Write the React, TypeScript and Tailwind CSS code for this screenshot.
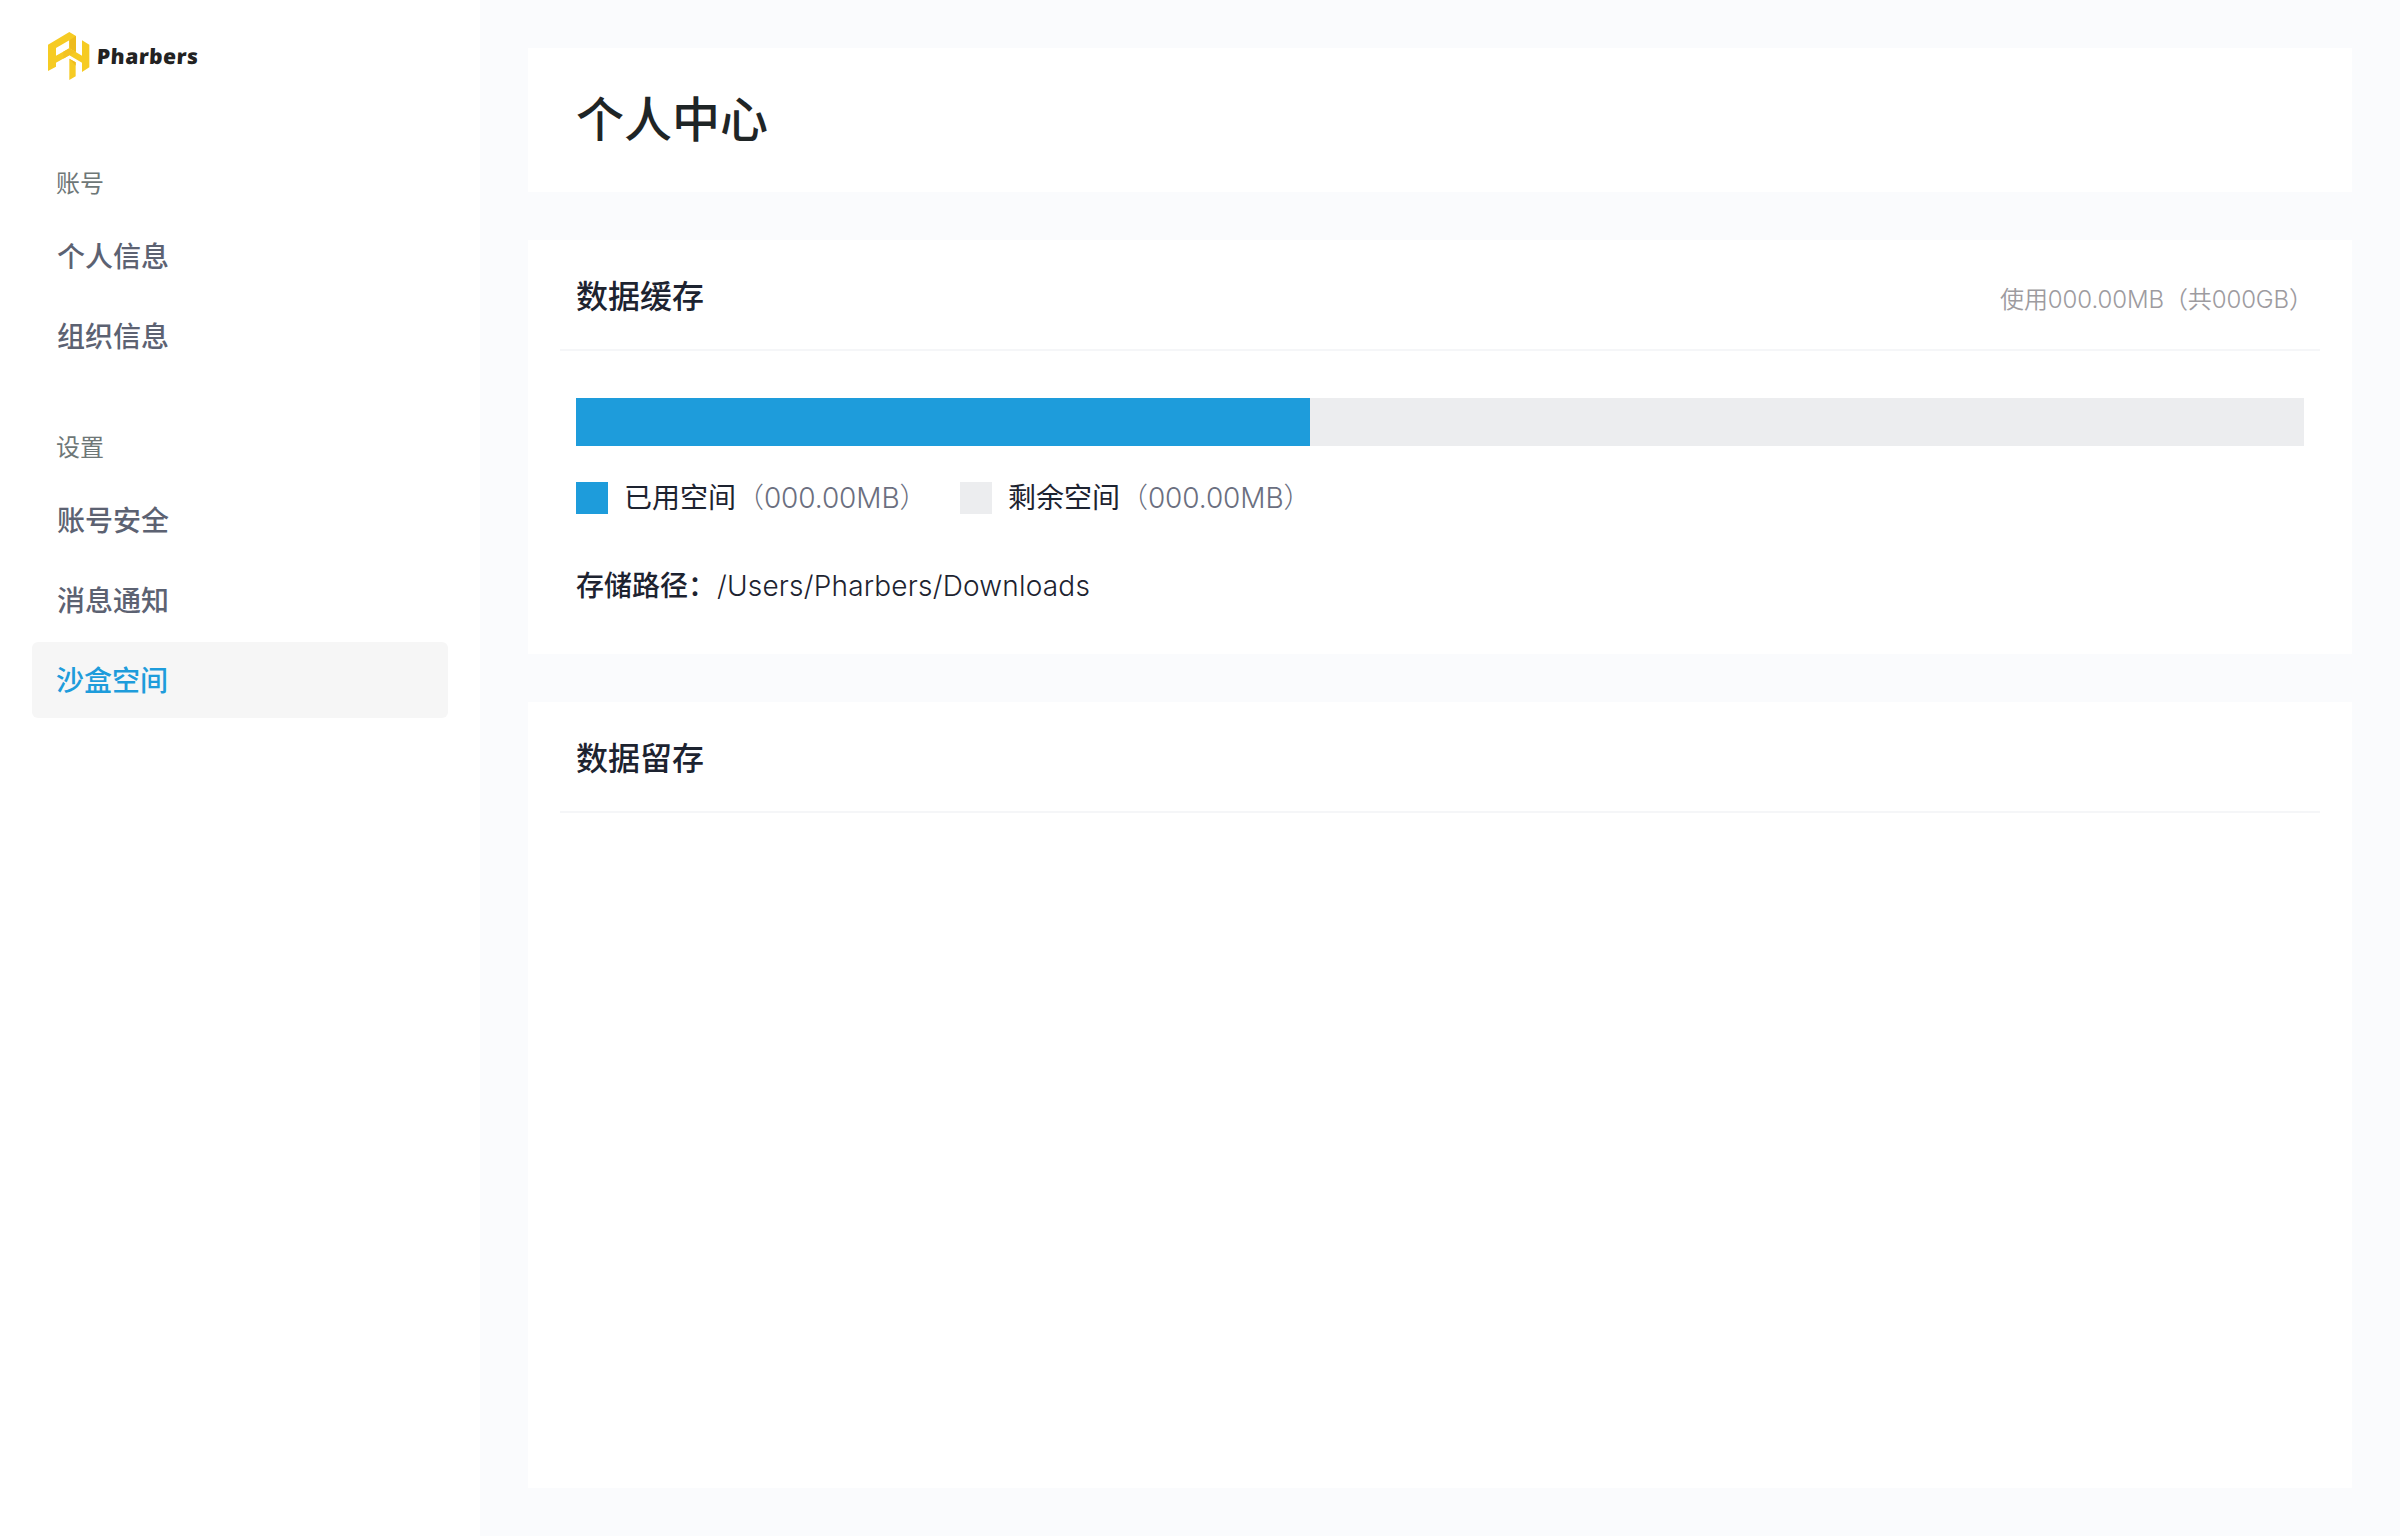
import React from "react";

type NavItem = { label: string; active?: boolean };

const accountItems: NavItem[] = [{ label: "个人信息" }, { label: "组织信息" }];
const settingItems: NavItem[] = [
  { label: "账号安全" },
  { label: "消息通知" },
  { label: "沙盒空间", active: true },
];

function Logo() {
  return (
    <div className="flex h-12 items-center pl-4">
      <svg viewBox="0 0 126 144" className="h-12 w-[42px] shrink-0">
        <path d="M0 38 64 0 84 12V60L64 49V25L24 48V71L64 49V70L24 92V104L0 117Z" fill="#f6cb23" />
        <path d="M64 25 84 12V60L64 49Z" fill="#eebb1c" />
        <path d="M64 49 102 71V25L124 38V106L102 120V92L64 70Z" fill="#f6cb23" />
        <path d="M64 49 84 60 64 70 46 80V59Z" fill="#f3c321" />
        <path d="M64 80 83 91V133L64 144Z" fill="#f6cb23" />
        <path d="M64 80 83 91V101Z" fill="#eebb1c" />
      </svg>
      <span className="mb-px ml-[7px] inline-block -skew-x-3 font-['Open_Sans','Liberation_Sans',sans-serif] text-[21px] leading-6 font-extrabold tracking-[0.5px] text-[#222]">
        Pharbers
      </span>
    </div>
  );
}

function NavGroup({ title, items }: { title: string; items: NavItem[] }) {
  return (
    <section>
      <h3 className="mb-[18px] px-6 text-[24px] leading-8 font-normal text-[#6e7777]">{title}</h3>
      <ul className="flex flex-col gap-1">
        {items.map((item) => (
          <li
            key={item.label}
            className={
              item.active
                ? "h-[76px] rounded-md bg-[#f6f6f6] px-6 text-[28px] leading-[78px] font-medium text-[#1e9cdb]"
                : "h-[76px] px-[25px] text-[28px] leading-[78px] font-medium text-[#5c6272]"
            }
          >
            {item.label}
          </li>
        ))}
      </ul>
    </section>
  );
}

function CardHeader({ title, note }: { title: string; note?: string }) {
  return (
    <header className="mx-8 flex h-[111px] items-start justify-between border-b-2 border-[#f5f6f8] px-4 pt-[33px]">
      <h2 className="text-[32px] leading-[48px] font-medium text-[#1d2330]">{title}</h2>
      {note && <span className="-mr-[9px] pt-[7px] text-[24px] leading-10 font-[350] tracking-[-0.1px] text-[#9d9ba0]">{note}</span>}
    </header>
  );
}

function Legend({ swatch, label, value }: { swatch: string; label: string; value: string }) {
  return (
    <div className="flex w-96 items-center">
      <span className={`mr-4 size-8 ${swatch}`} />
      <span className="text-[28px] leading-8 text-[#1d2330]">{label}</span>
      <span className="text-[28px] leading-8 font-light tracking-[-0.1px] text-[#6b6f80]">{value}</span>
    </div>
  );
}

export default function App() {
  return (
    <div className="flex h-[1536px] w-[2400px] bg-[#fafbfd] font-['Inter','Noto_Sans_CJK_SC',sans-serif]">
      <aside className="w-[480px] bg-white px-8 pt-8">
        <Logo />
        <nav className="flex flex-col gap-[58px] pt-[88px]">
          <NavGroup title="账号" items={accountItems} />
          <NavGroup title="设置" items={settingItems} />
        </nav>
      </aside>
      <main className="flex flex-1 flex-col gap-12 p-12">
        <section className="h-36 bg-white px-12 pt-9">
          <h1 className="text-[48px] leading-[72px] font-medium text-[#1f2526]">个人中心</h1>
        </section>
        <section className="h-[414px] bg-white">
          <CardHeader title="数据缓存" note="使用000.00MB（共000GB）" />
          <div className="px-12 pt-[47px]">
            <div className="h-12 bg-[#ecedef]">
              <div className="h-12 w-[734px] bg-[#1e9cdb]" />
            </div>
            <div className="mt-9 flex">
              <Legend swatch="bg-[#1e9cdb]" label="已用空间" value="（000.00MB）" />
              <Legend swatch="bg-[#ecedef]" label="剩余空间" value="（000.00MB）" />
            </div>
            <p className="mt-[52px] text-[28px] leading-10 text-[#1d2330]">
              <span className="font-medium">存储路径：</span>
              <span className="ml-px font-[350] tracking-[0.2px]">/Users/Pharbers/Downloads</span>
            </p>
          </div>
        </section>
        <section className="flex-1 bg-white">
          <CardHeader title="数据留存" />
        </section>
      </main>
    </div>
  );
}
